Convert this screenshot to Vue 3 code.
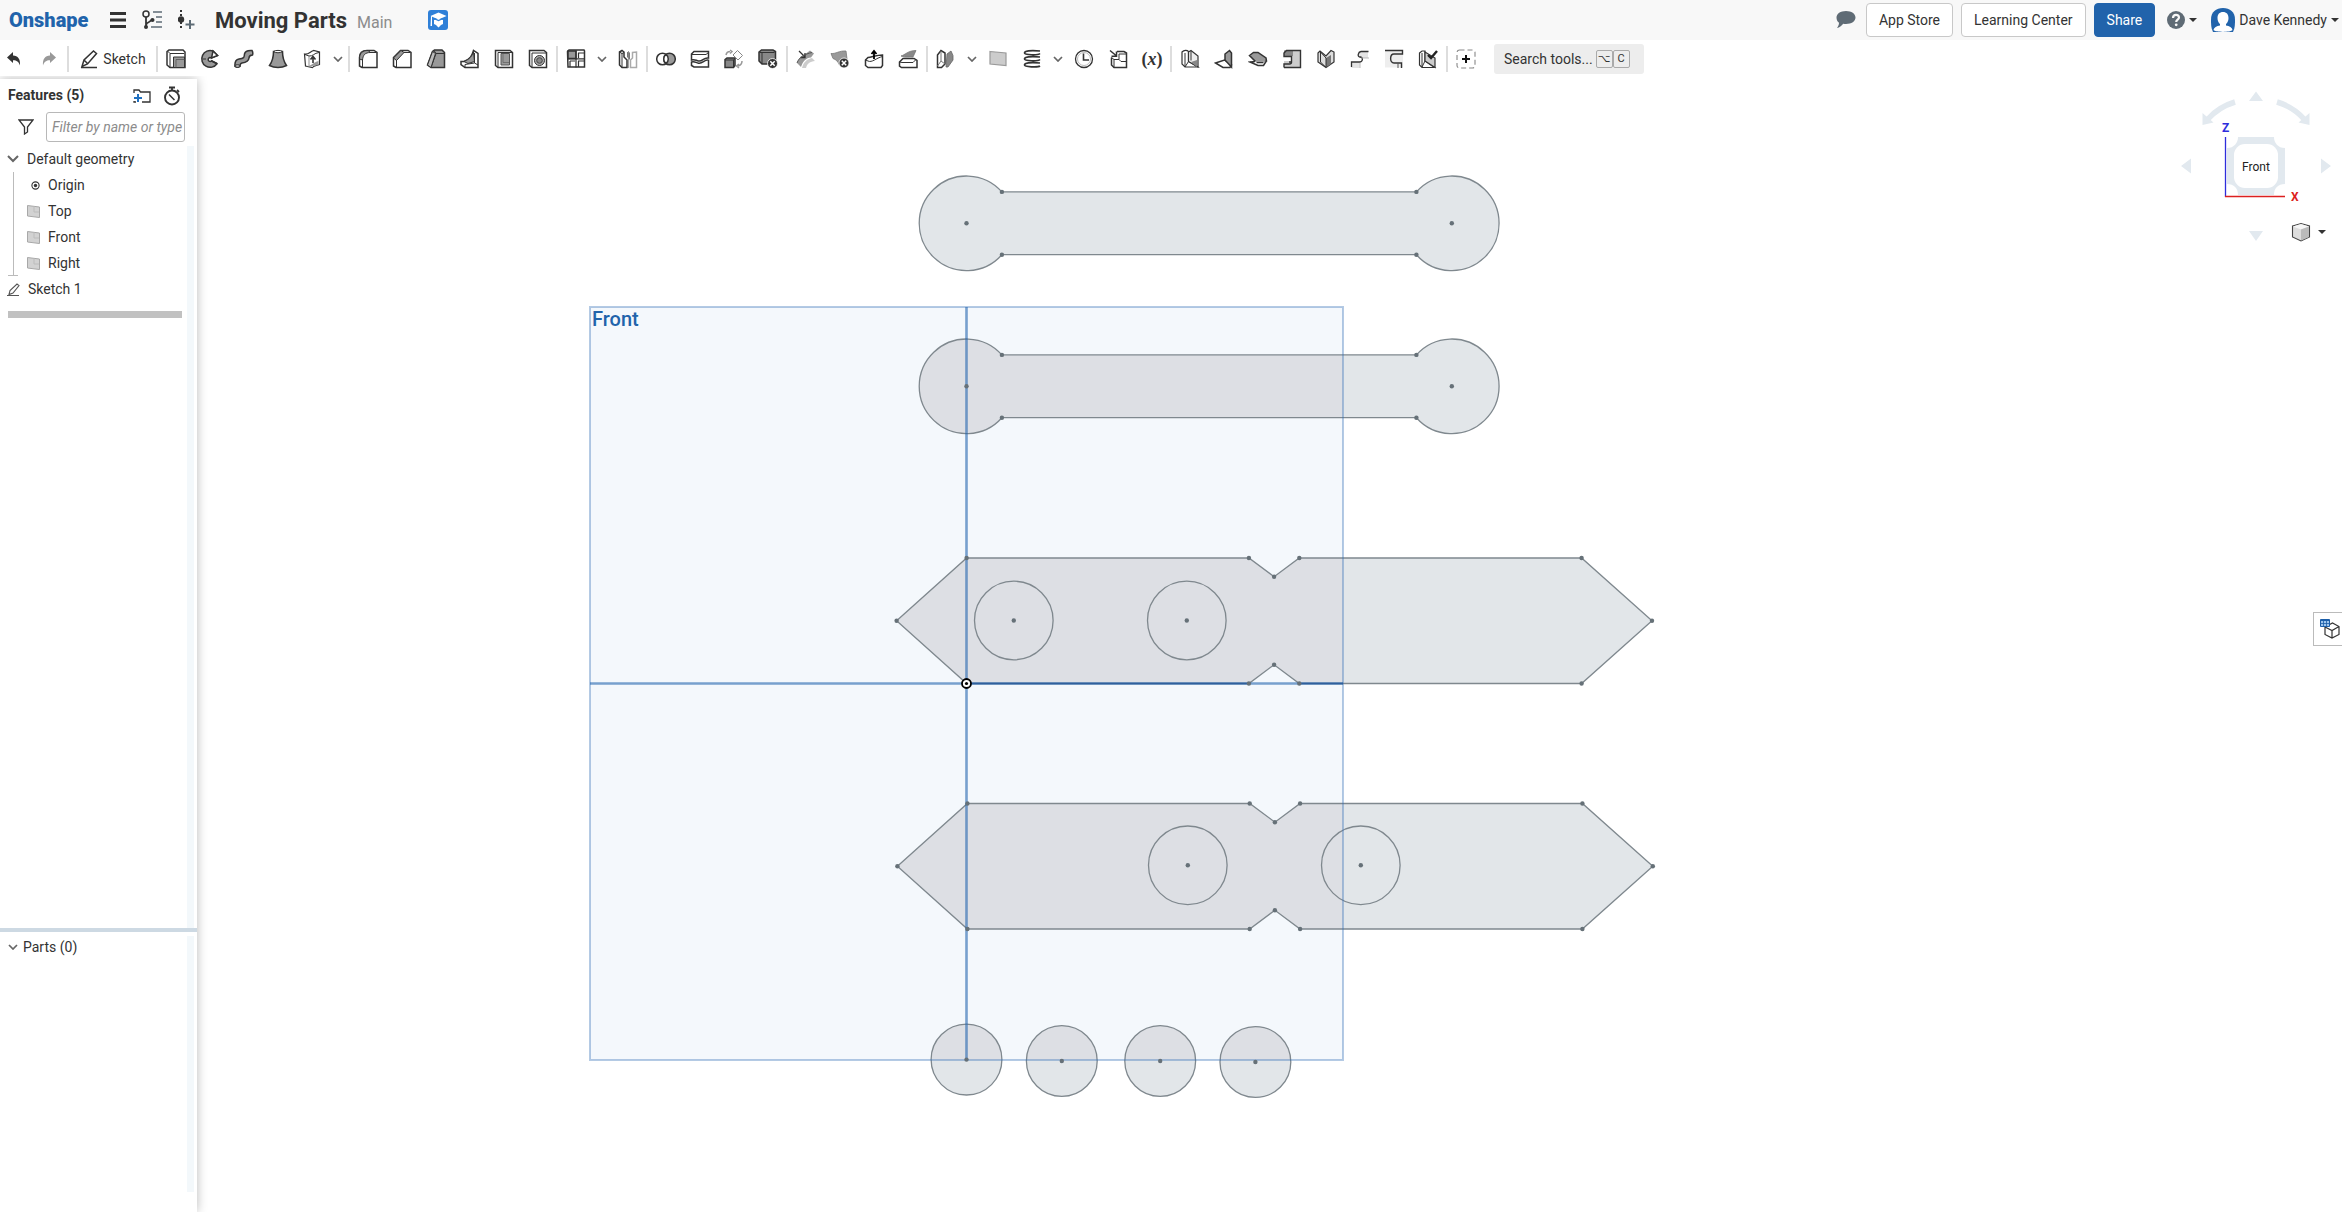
<script setup>
import { ref } from 'vue'

const filter = ref('')

const icons = {
  undo: '<path d="M2 8.500 8 3v3.500c5 .3 7.500 3.500 7 10-1.500-4-3.500-5.300-7-5.200V14z" fill="#333" stroke="none"/>',
  redo: '<path d="M18 8.500 12 3v3.500c-5 .3-7.500 3.500-7 10 1.500-4 3.500-5.300 7-5.200V14z" fill="#999" stroke="none"/>',
  extrude: '<path d="M1 2.500 3 1h14l2 2v15.500H4L1 16z" fill="#fff"/><path d="M4 4.500h14M4 4.500v14M4 4.500 1.500 2" stroke-width="1"/><path d="M7.500 8h11v10.500h-11z" fill="#999" stroke-width="1"/><path d="M10 10.500h8.500M10 10.500v8" stroke="#555" stroke-width=".8"/>',
  revolve: '<path d="M17.500 6.500 11.500 9a2 2 0 1 0 .2 2.800l5.300 3A8.400 8.400 0 1 1 13 2z" fill="#999"/><path d="m13 2 4.500 4.500-6 2.500zM11.500 12l5.500 2.500" fill="#fff"/><path d="M2 10h4" stroke="#555"/>',
  sweep: '<path d="M1 17.500c-.5-5 1-7 4-7.500 6-.8 5-2 5.500-5 .6-3 3-3.800 7.500-3.500 1 1.500 1 3 .5 4.500-2.500.2-3.500 1-3.500 3-.3 3.500-3 4.500-7 5-1.500.2-2 1.500-2 3.500-1.500 1-3.500 1-5 0z" fill="#999"/><ellipse cx="3.500" cy="17" rx="2.500" ry="1.300" fill="#bbb" stroke-width="1"/>',
  loft: '<path d="M5.500 2.500C5.500 9 4 13 1.500 16.500c5 2.700 12 2.700 17 0-2.500-3.500-4-7.500-4-14z" fill="#999"/><path d="M5.500 2.500c2-1.500 7-1.500 9 0-2 1.700-7 1.700-9 0z" fill="#fff" stroke-width="1"/>',
  thicken: '<path d="M2.500 5c4 1 5-2 9-3.500L17.500 3v12.500c-3 1.500-5 .5-7 3L3.500 17z" fill="#fff" stroke-width="1.200"/><path d="M4 18c5-1 8-5 12.500-6v4z" fill="#999" stroke="none"/><path d="M3 5.500 7 7c4 .5 5-3 10-3.500" stroke-width="1"/><path d="M11 14V9M8.500 10.500l2.500-3 2.500 3" stroke-width="1.600"/><path d="M7 7v10" stroke="#777" stroke-width=".8"/>',
  fillet: '<path d="M1.500 17V8.500C1.500 3.500 4.500 1.500 9 1.500h7l3 2v15H4z" fill="#fff"/><path d="M1.500 10C1.500 4 4.500 1.500 10 1.500l2.500 2C7 3.500 5 6 4.500 11z" fill="#999" stroke-width="1"/><path d="M12 3.500h6.500M4.500 10.500v8" stroke-width="1"/>',
  chamfer: '<path d="M1.500 17V8.500l7-7H16l3 2v15H4z" fill="#fff"/><path d="m1.500 9 7.500-7.500 3 2-7.500 8z" fill="#999" stroke-width="1"/><path d="M12 3.500h6.500M4.500 11v7.500" stroke-width="1"/>',
  draft: '<path d="m1.500 16 5-13.500L8.500 1H16l2.500 2.500v15H5z" fill="#999"/><path d="m5 18.500 5-14h8M10 4.500 8 1.500" stroke-width="1"/><path d="m1.500 16 5-13.500 3 2-4.500 14z" fill="#bbb" stroke-width="1"/>',
  rib: '<path d="M1 12.500h3C10 10 12 7 13.500 1.500l4.500 3v14H5L1 15.500z" fill="#fff"/><path d="M4 12.500C10 10 12 7 13.500 3l1 9.500L8 14.500z" fill="#999" stroke-width="1"/><path d="M14.500 4v10L5 15.500v3M14.500 14l3.500 2" stroke-width="1"/>',
  shell: '<path d="M1.500 1.500H16l2.500 2v15H4l-2.500-2z" fill="#fff"/><path d="M4 3.500h14M4 3.500v15" stroke-width="1"/><path d="M7 4.500h8.500V16H7z" fill="#999" stroke="#555" stroke-width="1"/><path d="M9 5v8.500h6" stroke="#666" stroke-width=".8"/>',
  hole: '<path d="M1.500 1.500H16l2.500 2v15H4l-2.500-2z" fill="#fff"/><path d="M4 4h14M4 4v14" stroke-width="1"/><circle cx="11.500" cy="11.500" r="5" fill="#aaa" stroke-width="1"/><circle cx="11.500" cy="11.500" r="2.800" fill="#888" stroke="#444" stroke-width="1"/>',
  pattern: '<path d="M1.500 2.500 3 1h15l.5 1v16H2z" fill="#fff"/><path d="M2 2h8v7.500H2z" fill="#999"/><path d="M10 1.500v17M1.500 9.800h17M4 12h5M12 12h6M12 4h6M4 12v6M12.500 12v6M12.500 4v5" stroke-width="1.200"/>',
  mirror: '<path d="M1.500 3 4 1.500l2 1.500v5l3 3v7.500H4L1.500 16z" fill="#fff"/><path d="M4 4v14.500M1.500 3 4 4.500l2-1" stroke-width="1"/><path d="M9 3v5l3 3V3.500z" fill="#777" stroke="none"/><path d="M12.500 18.500V11l2-2V3.500l4-.5v15.500z" stroke="#aaa" fill="#fff"/><path d="M10.500 2v17" stroke="#888" stroke-width=".8"/>',
  union: '<circle cx="6.500" cy="10" r="5.800" fill="#fff"/><circle cx="13.500" cy="10" r="5.800" fill="#999"/><path d="M10 5.400a5.800 5.800 0 0 1 0 9.200 5.800 5.800 0 0 1 0-9.200z" fill="#fff"/>',
  split: '<path d="M1.500 5 4 2.500h14.500V9c-5-1-6 4-10 3-3-.8-4-2-7-1z" fill="#fff"/><path d="M1.500 13c3-1 4 .5 7 1.200 4 1 6-4 10-3V18H4l-2.500-1.500z" fill="#fff"/><path d="M2 5.500h14l2.500-2" stroke-width="1"/>',
  transform: '<path d="M1 10.500 3 9h8v7.500l-1.500 2H1z" fill="#888"/><path d="M1 11h8.500v7.500M9.500 11 11 9.300" stroke-width="1"/><path d="m9 6 4.500-4.500 5 5L14 11z" fill="#fff" stroke="#888" stroke-width="1"/><path d="M2 6c.5-2.500 2-3.500 4-3.500M6 1l2 1.500L6 4.500M18 12c0 3-1.500 4.500-4 5M15 15l-2.500 2L15 19" stroke="#999"/>',
  deletePart: '<path d="M1 3 3.500 1H15l2.500 1.500V15H4l-3-3z" fill="#888"/><path d="M1.500 3.500h15M4 4v11" stroke-width="1"/><circle cx="14.500" cy="14.500" r="5" fill="#333" stroke="#fff" stroke-width=".8"/><path d="m12.300 12.300 4.400 4.400m0-4.400-4.400 4.400" stroke="#fff" stroke-width="1.500"/>',
  modifyFillet: '<path d="M1 14c1-4 4-7 9-9.500l4-3 4 3-3 4C10 9 7 12 5 18z" fill="#999" stroke="none"/><path d="M6 19c1.500-6 5-9 10-10l3 3c-5 .5-8 2.500-9 7z" fill="#ccc" stroke="none"/><path d="m3 2 6 6M9 4v4.500H4.500" stroke-width="1.300"/><path d="M1 14C3 8 9 5 16 3.500" stroke="#555" stroke-width="1"/>',
  deleteFace: '<path d="M1 4.500c5 .5 8-3 15-2.500l1 8-8 5.500c-1-3-3-5-6-6z" fill="#999" stroke="#777" stroke-width=".8"/><circle cx="14" cy="14" r="5" fill="#333" stroke="#fff" stroke-width=".8"/><path d="m11.800 11.800 4.400 4.400m0-4.400-4.400 4.400" stroke="#fff" stroke-width="1.500"/>',
  moveFace: '<path d="M1.500 11 4 8.500C8 8 13 6 18.500 6v10.500l-1.500 2H4l-2.500-2z" fill="#fff"/><path d="M1.500 11 4 12c4 2 8-3 14.500-4.500" stroke-width="1"/><path d="M10 10V3M7.500 5 10 2l2.500 3" stroke="#000" stroke-width="1.800"/>',
  replaceFace: '<path d="M3 7c4-1 7-5.500 15-5.500L15 8c-4-.5-7 1-12-1z" fill="#888" stroke="#777" stroke-width=".8"/><path d="M1.500 13 5 9.500h11l3 2V18.500H3.500l-2-1.500z" fill="#fff"/><path d="M1.500 13 4 13.500h11l3-3" stroke-width="1"/>',
  offset: '<path d="M1.500 6 5 1.500l4 2.500v11l-3.500 3.500h-4z" fill="#fff"/><path d="M5 2v10l-3.500 5M5 12l4 3" stroke="#777" stroke-width="1"/><path d="m10 18 1-13 4-3 2 4.500V11L12 18z" fill="#888" stroke="#666" stroke-width=".8"/>',
  plane: '<path d="M2 2.500 18 4v12.500L2 15z" fill="#ccc" stroke="#999" stroke-width="1.200"/>',
  helix: '<path d="M18 2C8 1 2.500 2 2.500 4S16 6.500 18 4.500M18 8C8 7 2.500 8 2.500 10S16 12.500 18 10.500M18 14C8 13 2.500 14 2.500 16S16 18.500 18 17" stroke-width="1.700"/>',
  clock: '<circle cx="10" cy="10" r="8.500" fill="#fff" stroke-width="1.300"/><circle cx="10" cy="10" r="6.500" stroke="#bbb" stroke-width="1"/><path d="M9.500 4.500v6.500H15" stroke-width="1.600"/>',
  derived: '<path d="M3.500 8.500V16L6 18.500h12.500V4L16 2.500H9" fill="#fff"/><path d="M6 10.500h5V5h7M6 10.500v8M3.500 8.500 6 10.500M11 10.500l2 2h5" stroke-width="1"/><path d="m2 1.500 6 5M8.500 2.500v4.800H3.500" stroke-width="1.500"/>',
  frame: '<path d="M2 3c2-2 5-2 6.500-.5v10L18 18H5l-3-3z" fill="#fff" stroke-width="1.200"/><path d="M8.500 3 11 1.500 18 7v11l-9.500-5.500z" fill="#eee" stroke-width="1.200"/><path d="M5 4v14M8.500 12.500 5 18M11 2v9.500" stroke-width="1"/><path d="m11 13 6-2v7z" fill="#888" stroke="none"/>',
  flange: '<path d="m1.500 14 9-3 7 5-1.500 2.500H9z" fill="#fff"/><path d="m11 5 4.500-3.500L17.500 4v14l-6.500-7z" fill="#999"/>',
  hem: '<path d="m1.500 6.500 4-3H10L18 9l.5 3-3 1.500h-7z" fill="#999"/><path d="m18 12.500-2.500 4H10L2 13l5-.5" fill="#fff"/><path d="M8.500 13.500h7" stroke-width="1.500"/>',
  tab: '<path d="M2 1.500h16.500v17H2V12h7V7H2z" fill="#ccc" stroke="none"/><path d="M2 1.500h9V7H2z" fill="#888" stroke="none"/><path d="M2 18.500h16.500v-17H4.500L2 4v3.500h7.500V13H7M9.500 13c0 1.500-1 2-2 2H2v3.500" stroke-width="1.400"/>',
  bend: '<path d="M2 4 4 2l6 5 5-5.500L18 3v10l-8 5.500L2 13z" fill="#ddd" stroke-width="1.200"/><path d="m10 9 5-3v9l-5 3.500z" fill="#777" stroke="none"/><path d="M4.500 3 10 9v9M4.500 3v10l5 5" stroke-width="1"/>',
  corner: '<path d="M1.500 13h8v6h-8zM9 2h9v7H9z" fill="#e4e4e4" stroke="none"/><path d="M1.500 18v-5H9.500c3.500 0 4-5 .5-5C7 8 8 3 11 2.500h7.500M11 8H10" stroke-width="1.300"/><path d="M10 14v5M11 9h8" stroke="#aaa" stroke-width=".8"/>',
  relief: '<path d="M1 1.500h18v17H1z" fill="#eee" stroke="none"/><path d="M1 1.500h17.500v3.500H10c-4.500 0-4.500 9 0 9h7.500v5" stroke-width="1.400"/><path d="M14 14v5" stroke="#555" stroke-width="1"/>',
  finish: '<path d="M1.500 4 4 2h3v10l9.500 6.500H4L1.500 16z" fill="#fff" stroke-width="1.200"/><path d="M7 12V3l10 6v9.500z" fill="#ccc" stroke-width="1.200"/><path d="M4 4v14M7 12l-3 6" stroke-width="1"/><path d="m10 6 3 3 6-7" stroke="#222" stroke-width="2.400"/>',
  custom: '<rect x="1" y="1" width="18" height="18" rx="2.500" stroke="#888" stroke-width="1.100" stroke-dasharray="5 3"/><path d="M10 6v8M6 10h8" stroke="#111" stroke-width="2"/>'
}

// Feature groups; 'menu' marks the drop-down arrow that follows a tool.
const groups = [
  ['extrude', 'revolve', 'sweep', 'loft', 'thicken', 'menu'],
  ['fillet', 'chamfer', 'draft', 'rib', 'shell', 'hole'],
  ['pattern', 'menu', 'mirror'],
  ['union', 'split', 'transform', 'deletePart'],
  ['modifyFillet', 'deleteFace', 'moveFace', 'replaceFace'],
  ['offset', 'menu', 'plane', 'helix', 'menu', 'clock', 'derived', 'variable'],
  ['frame', 'flange', 'hem', 'tab', 'bend', 'corner', 'relief', 'finish'],
  ['custom']
]

const planes = ['Top', 'Front', 'Right']

// Sketch geometry in view coordinates.
const link = (cy) =>
  `M1001.900 ${cy - 31.4}H1416.400A47.300 47.300 0 1 1 1416.400 ${cy + 31.4}H1001.900A47.300 47.300 0 1 1 1001.900 ${cy - 31.4}Z`
const arrowPoints = (x, y) => [
  [x - 70, y - 62.8], [x, y - 125.5], [x + 282.3, y - 125.5], [x + 307.5, y - 106.8],
  [x + 332.7, y - 125.5], [x + 615, y - 125.5], [x + 685.4, y - 62.8], [x + 615, y],
  [x + 332.7, y], [x + 307.5, y - 18.8], [x + 282.3, y]
]
const arrow = (x, y) => 'M' + [...arrowPoints(x, y), [x, y]].map((p) => p.join(' ')).join('L') + 'Z'
const disc = (cx, cy, r) => `M${cx - r} ${cy}a${r} ${r} 0 1 1 ${2 * r} 0a${r} ${r} 0 1 1 ${-2 * r} 0Z`

const faces = [
  link(223.3), link(386.3), arrow(966.6, 683.5), arrow(967.4, 929),
  disc(966.5, 1059.6, 35.4), disc(1061.8, 1061, 35.4), disc(1160.2, 1061, 35.4), disc(1255.4, 1062, 35.4)
]
const holes = [disc(1013.8, 620.5, 39.3), disc(1186.8, 620.5, 39.3), disc(1187.8, 865.3, 39.3), disc(1360.8, 865.3, 39.3)]
const dots = [
  [966.5, 223.3], [1451.8, 223.3], [966.5, 386.3], [1451.8, 386.3],
  ...[223.3, 386.3].flatMap((y) => [[1001.9, y - 31.4], [1001.9, y + 31.4], [1416.4, y - 31.4], [1416.4, y + 31.4]]),
  ...arrowPoints(966.6, 683.5), ...arrowPoints(967.4, 929), [967.4, 929],
  [1013.8, 620.5], [1186.8, 620.5], [1187.8, 865.3], [1360.8, 865.3],
  [966.5, 1059.6], [1061.8, 1061], [1160.2, 1061], [1255.4, 1062]
]
</script>

<template>
  <div class="app">
    <header class="topbar">
      <a href="#" class="logo">Onshape</a>
      <button class="plain" aria-label="Menu">
        <svg width="16" height="16" viewBox="0 0 16 16"><path d="M0 1.500h16M0 8h16M0 14.500h16" stroke="#333" stroke-width="3" /></svg>
      </button>
      <button class="plain versions" aria-label="Versions and history">
        <svg width="20" height="20" viewBox="0 0 20 20" fill="none">
          <circle cx="4" cy="4" r="3" stroke="#333" stroke-width="1.500" />
          <path d="M4 7v10M4 15c1-4 5-2 6-6" stroke="#333" stroke-width="1.800" />
          <circle cx="4" cy="17" r="2" fill="#333" /><circle cx="10.500" cy="10" r="2" fill="#333" />
          <path d="M11 2h9M14 7h6M14 12h6M9 17h11" stroke="#5d6b75" stroke-width="1.600" />
        </svg>
      </button>
      <button class="plain" aria-label="Create version">
        <svg width="17" height="20" viewBox="0 0 17 20" fill="none">
          <path d="M3 0v19" stroke="#333" stroke-width="2" stroke-dasharray="2 2" />
          <circle cx="3" cy="9.500" r="3.200" fill="#333" />
          <path d="M12 10v9M7.500 14.500h9" stroke="#5d6b75" stroke-width="2" />
        </svg>
      </button>
      <h1>Moving Parts</h1>
      <span class="workspace">Main</span>
      <svg class="edu" width="20" height="20" viewBox="0 0 20 20">
        <rect width="20" height="20" rx="3" fill="#2f80d8" />
        <path d="m10.500 2.500 8 3.500-8 3.500-8-3.500zM6 10l4.500-1 4.500 1v4l-2 1-2.500 2.500L8 15l-2-1zM3 6.500h1V16H2.500z" fill="#fff" />
        <path d="m6 8.500 4.500 2 4.500-2" fill="none" stroke="#2f80d8" stroke-width="1.200" />
      </svg>

      <div class="account">
        <button class="plain" aria-label="Comments">
          <svg width="20" height="18" viewBox="0 0 20 18"><path d="M10 0c5.500 0 9.500 2.800 9.500 6.500S15.500 13 10 13c-1 0-2 0-2.800-.3C5.500 15 3.500 16.500 1 17c1.200-1.500 2-3.200 2-5.200C1.300 10.500.5 8.500.5 6.500.5 2.800 4.500 0 10 0z" fill="#5f6b75" /></svg>
        </button>
        <button class="btn store">App Store</button>
        <button class="btn">Learning Center</button>
        <button class="btn primary">Share</button>
        <button class="plain help" aria-label="Help">
          <svg width="18" height="18" viewBox="0 0 18 18"><circle cx="9" cy="9" r="9" fill="#5f6b75" /><path d="M6 7c0-4 6-4 6-.6C12 8.600 9.200 8.600 9.200 11" fill="none" stroke="#f8f8f8" stroke-width="2.200" /><circle cx="9.200" cy="13.800" r="1.400" fill="#f8f8f8" /></svg>
          <svg width="8" height="4" viewBox="0 0 8 4"><path d="M0 0h8L4 4z" fill="#333" /></svg>
        </button>
        <button class="plain user">
          <svg width="24" height="24" viewBox="0 0 24 24">
            <path d="M2 24C0 20 0 16 0 11.500 0 4 5 0 12 0s12 4 12 11.500C24 16 24 20 22 24z" fill="#2163ab" />
            <path d="M12 4c3.500 0 5.500 2.300 5.500 6 0 2.700-1 4.800-2.500 6v1.500c3.500.6 6 2 6.500 4.500C19 24.500 5 24.500 2.500 22c.5-2.500 3-3.900 6.500-4.500V16c-1.500-1.200-2.500-3.300-2.500-6 0-3.700 2-6 5.500-6z" fill="#fff" />
          </svg>
          <span>Dave Kennedy</span>
          <svg class="down" width="8" height="4" viewBox="0 0 8 4"><path d="M0 0h8L4 4z" fill="#333" /></svg>
        </button>
      </div>
    </header>

    <nav class="toolbar" aria-label="Feature tools">
      <button class="tool undo" aria-label="Undo"><svg class="ico" viewBox="0 0 20 20" v-html="icons.undo" /></button>
      <button class="tool redo" aria-label="Redo"><svg class="ico" viewBox="0 0 20 20" v-html="icons.redo" /></button>
      <i class="sep" />
      <button class="tool sketch">
        <svg class="ico" viewBox="0 0 20 20"><path d="M3 17.500 5 11 14.500 2l3 2.500L8.500 15zM5 11l3.500 3.500M2 18.500h16" /></svg>
        Sketch
      </button>
      <template v-for="(group, g) in groups" :key="g">
        <i class="sep" />
        <template v-for="(name, n) in group" :key="n">
          <button v-if="name === 'menu'" class="tool menu" aria-label="More tools">
            <svg width="10" height="6" viewBox="0 0 10 6"><path d="m1 1 4 4 4-4" fill="none" stroke="#666" stroke-width="1.700" /></svg>
          </button>
          <button v-else-if="name === 'variable'" class="tool variable" aria-label="Variable">(<em>x</em>)</button>
          <button v-else class="tool" :aria-label="name"><svg class="ico" viewBox="0 0 20 20" v-html="icons[name]" /></button>
        </template>
      </template>
      <button class="search">Search tools...<kbd>⌥</kbd><kbd>C</kbd></button>
    </nav>

    <div class="body">
      <aside class="panel">
        <section class="features">
          <div class="panel-head">
            <h2>Features (5)</h2>
            <button class="plain" aria-label="Add folder">
              <svg width="18" height="14" viewBox="0 0 18 14" fill="none"><path d="M1 4V1h5l1.500 2H17v10H9M1 12v1h2" stroke="#333" stroke-width="1.300" /><path d="M5 5v8M1 9h8" stroke="#2070c0" stroke-width="2" /></svg>
            </button>
            <button class="plain watch" aria-label="Rebuild times">
              <svg width="18" height="20" viewBox="0 0 18 20" fill="none"><circle cx="9" cy="11.500" r="7" stroke="#333" stroke-width="1.900" /><path d="M6 1.500h6M9 1.500V5M14 4l2 2" stroke="#333" stroke-width="1.800" /><path d="m6 8.500 5.500 5.500" stroke="#333" stroke-width="1.500" /></svg>
            </button>
          </div>
          <div class="filter">
            <label for="filter" aria-label="Filter">
              <svg width="16" height="16" viewBox="0 0 16 16" fill="none"><path d="M1 1h14L9.500 8v5L6.500 15V8z" stroke="#333" stroke-width="1.300" /></svg>
            </label>
            <input id="filter" v-model="filter" type="text" placeholder="Filter by name or type" />
          </div>
          <div class="scroll">
            <div class="tree">
              <div class="row head">
                <svg width="12" height="8" viewBox="0 0 12 8"><path d="m1 1 5 5 5-5" fill="none" stroke="#666" stroke-width="2" /></svg>
                Default geometry
              </div>
              <ul>
                <li class="row">
                  <svg width="13" height="9" viewBox="0 0 13 9" fill="none"><circle cx="8.500" cy="4.500" r="3.600" stroke="#333" stroke-width="1.100" /><circle cx="8.500" cy="4.500" r="1.700" fill="#333" /></svg>
                  Origin
                </li>
                <li v-for="p in planes" :key="p" class="row">
                  <svg width="13" height="13" viewBox="0 0 13 13"><path d="M.5.500 12.500 2v10.500L.5 11z" fill="#d2d2d2" stroke="#a8a8a8" /><path d="M7 1.500V7h5" fill="none" stroke="#bcbcbc" /></svg>
                  {{ p }}
                </li>
              </ul>
              <div class="row item">
                <svg width="13" height="13" viewBox="0 0 13 13" fill="none"><path d="m2 11.500 1-4L10 1l2 1.500L6 10zM0 12.500h12" stroke="#555" stroke-width="1.100" /></svg>
                Sketch 1
              </div>
              <div class="rollback" />
            </div>
            <div class="track" />
          </div>
        </section>
        <section class="parts">
          <div class="row">
            <svg width="10" height="6" viewBox="0 0 10 6"><path d="m1 1 4 4 4-4" fill="none" stroke="#666" stroke-width="1.700" /></svg>
            Parts (0)
          </div>
          <div class="track" />
        </section>
      </aside>

      <main class="stage">
        <svg class="scene" viewBox="197 79 2145 1133" preserveAspectRatio="xMinYMin meet">
          <defs><clipPath id="inplane"><rect x="590" y="307" width="753" height="753" /></clipPath></defs>
          <rect x="590" y="307" width="753" height="753" fill="#f4f8fc" />
          <path v-for="d in faces" :key="d" :d="d" fill="#e2e6e9" />
          <g clip-path="url(#inplane)"><path v-for="d in faces" :key="d" :d="d" fill="#dddfe4" /></g>
          <g fill="none" stroke="#7f888e" stroke-width="1.300"><path v-for="d in [...faces, ...holes]" :key="d" :d="d" /></g>
          <rect x="590" y="307" width="753" height="753" fill="none" stroke="#2e6db4" stroke-opacity=".36" stroke-width="2" />
          <path d="M966.500 307v753M590 683.500h753" stroke="#1d60ad" stroke-opacity=".58" stroke-width="2.600" />
          <path d="M966.500 683.500H1249M1299 683.500h44" stroke="#2f5f9c" stroke-width="1.500" />
          <circle v-for="(p, i) in dots" :key="i" :cx="p[0]" :cy="p[1]" r="2.200" fill="#667178" />
          <circle cx="966.500" cy="683.500" r="4.500" fill="#fff" stroke="#000" stroke-width="1.800" />
          <circle cx="966.500" cy="683.500" r="1.600" />
          <text class="plane-name" x="592" y="326">Front</text>
        </svg>

        <svg class="viewcube" width="182" height="170" viewBox="0 0 182 170">
          <g fill="#e2e9ef">
            <path d="M89 21h14L96 11.500zM89 151h14l-7 10zM31 78.500v15L21 86zM161 78.500v15l10-7.500z" />
            <path d="M42.500 33v12l11-2.500zM149.500 33v12l-11-2.500z" />
            <path d="M78 57h36c0 6 4 11 11 11v36c-7 0-11 4-11 11H78c0-7-4-11-11-11V68c7 0 11-5 11-11z" />
          </g>
          <path d="M75 22c-10 3-19 8-27 17M117 22c10 3 19 8 27 17" fill="none" stroke="#e2e9ef" stroke-width="5.500" />
          <rect x="74" y="64" width="44" height="44" rx="11" fill="#fff" />
          <path d="M65.500 57v60" stroke="#2d2ddc" stroke-width="1.300" />
          <path d="M65 116.500h60" stroke="#dc2020" stroke-width="1.300" />
          <text x="96" y="91" text-anchor="middle" fill="#222">Front</text>
          <text class="axis" x="62" y="52" fill="#2d2ddc">Z</text>
          <text class="axis" x="131" y="121" fill="#dc2020">X</text>
          <path d="m132.500 146 8.500-2.500 8.500 2.500v11l-8.500 4-8.500-4z" fill="#ddd" stroke="#444" stroke-width="1.100" />
          <path d="m133 146.500 8 3 8-3-8-2.500z" fill="#f6f6f6" /><path d="m141 149.500 8-3v10.500l-8 3.500z" fill="#bbb" />
          <path d="M158 150h8l-4 4z" fill="#333" />
        </svg>

        <button class="side-tab" aria-label="Configurations">
          <svg width="20" height="20" viewBox="0 0 20 20" fill="none"><path d="m5 8 7.500-4L19 7.500v8L12 19l-7-3.500zM5 8l7 3.500L19 7.500M12 11.500V19" stroke="#333" stroke-width="1.200" /><path d="M.5.500h9v7h-9z" fill="#9cc4ec" stroke="#1c5ea8" /><path d="M.5 1.500h9" stroke="#1c5ea8" /><path d="M1 4.500h8.500M3.500 2v5.500M6.500 2v5.500" stroke="#1c5ea8" stroke-width=".8" /></svg>
        </button>
      </main>
    </div>
  </div>
</template>

<style>
body {
  margin: 0;
}
</style>

<style scoped>
.app {
  display: flex;
  flex-direction: column;
  min-height: 100vh;
  background: #fff;
  color: #333;
  font: 14px/20px Roboto, "Liberation Sans", sans-serif;
}
button {
  font: inherit;
  color: inherit;
  margin: 0;
  padding: 0;
  border: 0;
  background: none;
}
svg {
  display: block;
  flex: none;
}
.topbar {
  display: flex;
  align-items: center;
  height: 40px;
  background: #f8f8f8;
}
.logo {
  width: 100px;
  padding-left: 9px;
  box-sizing: border-box;
  color: #2163ab;
  font-size: 20px;
  font-weight: 900;
  text-decoration: none;
}
.topbar > .plain {
  margin-left: 10px;
}
.topbar > .plain + .plain {
  margin-left: 16px;
}
h1 {
  margin: 2px 0 0 20px;
  font-size: 22px;
  line-height: 28px;
  font-weight: 700;
}
.workspace {
  margin: 6px 0 0 10px;
  font-size: 16px;
  color: #8c8c8c;
}
.edu {
  margin-left: 36px;
}
.account {
  display: flex;
  align-items: center;
  margin-left: auto;
  padding-right: 3px;
}
.btn {
  height: 34px;
  padding: 0 12px;
  margin-left: 8px;
  border: 1px solid #c8c8c8;
  border-radius: 4px;
  background: #fff;
  white-space: nowrap;
}
.btn.store {
  margin-left: 10px;
}
.btn.primary {
  background: #2163ab;
  border-color: #2163ab;
  color: #fff;
}
.help,
.user {
  display: flex;
  align-items: center;
  gap: 4px;
}
.help {
  margin-left: 12px;
}
.user {
  margin-left: 14px;
}
.toolbar {
  display: flex;
  align-items: center;
  height: 37px;
  padding-bottom: 2px;
  white-space: nowrap;
}
.tool {
  display: flex;
  flex: none;
  align-items: center;
  justify-content: center;
  width: 34px;
  height: 30px;
}
.tool.undo {
  width: 30px;
}
.tool.redo {
  width: 36px;
}
.tool.sketch {
  width: 85px;
  gap: 4px;
}
.tool.menu {
  width: 18px;
}
.tool.variable {
  font: bold 18px/20px "Liberation Serif", serif;
}
.ico {
  width: 20px;
  height: 20px;
  fill: none;
  stroke: #333;
  stroke-width: 1.5;
}
.sep {
  flex: none;
  width: 2px;
  height: 26px;
  margin: 0 1px;
  background: #ddd;
}
.search {
  display: flex;
  align-items: center;
  width: 150px;
  height: 30px;
  margin-left: 11px;
  padding-left: 10px;
  border-radius: 3px;
  background: #ededed;
}
kbd {
  width: 15px;
  height: 16px;
  border: 1px solid #aaa;
  border-radius: 2px;
  font: 11px/16px Roboto, "DejaVu Sans", sans-serif;
}
.search kbd:first-of-type {
  margin-left: 3px;
}
.body {
  display: flex;
  flex: 1;
}
.panel {
  display: flex;
  flex-direction: column;
  width: 197px;
  background: #fff;
  box-shadow: 0 0 10px rgba(0, 0, 0, 0.28);
  clip-path: inset(-3px -16px 0 0);
  z-index: 1;
}
.features {
  display: flex;
  flex: 1;
  flex-direction: column;
}
.panel-head {
  display: flex;
  align-items: center;
  height: 33px;
  padding-left: 8px;
}
h2 {
  width: 125px;
  margin: 0 0 2px;
  font-size: 14px;
  font-weight: 700;
}
.watch {
  margin-left: 12px;
}
.filter {
  display: flex;
  align-items: center;
  gap: 12px;
  padding-left: 18px;
}
input {
  width: 139px;
  height: 30px;
  box-sizing: border-box;
  padding: 0 0 0 5px;
  border: 1px solid #b8b8b8;
  border-radius: 3px;
  font: inherit;
  background: #fff;
}
input::placeholder {
  color: #8c8c8c;
  font-style: italic;
  opacity: 1;
}
.scroll {
  display: flex;
  flex: 1;
  margin-top: 4px;
}
.tree {
  width: 187px;
}
.track {
  width: 7px;
  background: #f3f8fb;
}
.row {
  display: flex;
  align-items: center;
  gap: 8px;
  height: 26px;
}
.row.head,
.row.item {
  padding-left: 7px;
}
ul {
  position: relative;
  margin: 0 0 0 13px;
  padding: 0 0 0 13px;
  border-left: 1px solid #bbb;
  list-style: none;
}
ul::after {
  content: "";
  position: absolute;
  left: -6px;
  bottom: 0;
  width: 10px;
  height: 1px;
  background: #bbb;
}
.rollback {
  height: 7px;
  margin: 9px 5px 0 8px;
  background: #c1c1c1;
}
.parts {
  display: flex;
  justify-content: space-between;
  height: 280px;
  padding: 0 3px 0 8px;
  border-top: 4px solid #cdd9e3;
}
.parts .row {
  gap: 5px;
  margin-top: 2px;
}
.parts .track {
  height: 256px;
  margin-top: 4px;
}
.stage {
  position: relative;
  flex: 1;
}
.scene {
  width: 100%;
}
.plane-name {
  fill: #2163ab;
  font-size: 20px;
  font-weight: 500;
}
.viewcube {
  position: absolute;
  top: 1px;
  right: 0;
  font-size: 12px;
}
.axis {
  font-weight: 700;
}
.side-tab {
  position: absolute;
  right: 0;
  top: 47%;
  display: flex;
  align-items: center;
  width: 29px;
  height: 34px;
  padding-left: 6px;
  border: 1px solid #bbb;
  border-right: 0;
  background: #fff;
}
</style>
